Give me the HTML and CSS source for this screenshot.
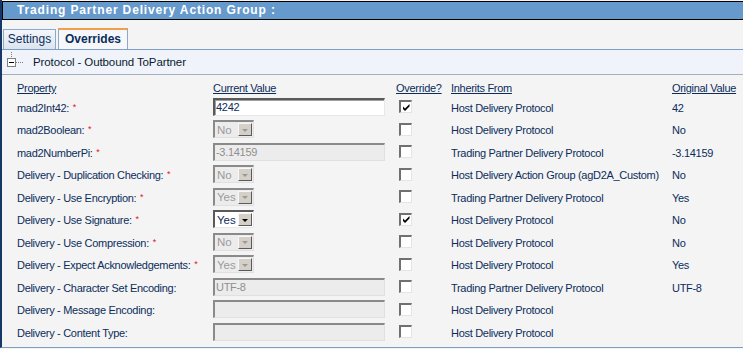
FILE: index.html
```html
<!DOCTYPE html>
<html>
<head>
<meta charset="utf-8">
<link rel="stylesheet" href="styles.css">
</head>
<body>
<div class="page">
  <div class="titlebar">Trading Partner Delivery Action Group :</div>
  <div class="tabs">
    <div class="tab">Settings</div>
    <div class="tab active">Overrides</div>
  </div>
  <div class="tree">
    <svg class="expander" width="22" height="24" viewBox="0 0 22 24">
      <line x1="9.5" y1="2" x2="9.5" y2="8" stroke="#808080" stroke-dasharray="1 1"/>
      <rect x="5.5" y="8.5" width="8" height="8" fill="#fff" stroke="#808080"/>
      <line x1="7" y1="12.5" x2="12" y2="12.5" stroke="#000"/>
      <line x1="14" y1="12.5" x2="21" y2="12.5" stroke="#808080" stroke-dasharray="1 1"/>
    </svg>
    <span class="tree-label">Protocol - Outbound ToPartner</span>
  </div>
  <div class="grid">
    <div class="row head">
      <span class="hd">Property</span>
      <span class="hd">Current Value</span>
      <span class="hd">Override?</span>
      <span class="hd">Inherits From</span>
      <span class="hd">Original Value</span>
    </div>

    <div class="row">
      <span class="lbl">mad2Int42: <span class="req">*</span></span>
      <span class="field"><span class="text">4242</span></span>
      <span class="cb checked"><svg width="9" height="9" viewBox="0 0 9 9"><path d="M1 3.5 L3 5.5 L7.5 1 L7.5 3.5 L3 8 L1 6 Z" fill="#000"/></svg></span>
      <span class="inh">Host Delivery Protocol</span>
      <span class="orig">42</span>
    </div>

    <div class="row">
      <span class="lbl">mad2Boolean: <span class="req">*</span></span>
      <span class="sel disabled"><span class="sv">No</span><span class="btn"><span class="arr"></span></span></span>
      <span class="cb"></span>
      <span class="inh">Host Delivery Protocol</span>
      <span class="orig">No</span>
    </div>

    <div class="row">
      <span class="lbl">mad2NumberPi: <span class="req">*</span></span>
      <span class="field disabled"><span class="text">-3.14159</span></span>
      <span class="cb"></span>
      <span class="inh">Trading Partner Delivery Protocol</span>
      <span class="orig">-3.14159</span>
    </div>

    <div class="row">
      <span class="lbl">Delivery - Duplication Checking: <span class="req">*</span></span>
      <span class="sel disabled"><span class="sv">No</span><span class="btn"><span class="arr"></span></span></span>
      <span class="cb"></span>
      <span class="inh">Host Delivery Action Group (agD2A_Custom)</span>
      <span class="orig">No</span>
    </div>

    <div class="row">
      <span class="lbl">Delivery - Use Encryption: <span class="req">*</span></span>
      <span class="sel disabled"><span class="sv">Yes</span><span class="btn"><span class="arr"></span></span></span>
      <span class="cb"></span>
      <span class="inh">Trading Partner Delivery Protocol</span>
      <span class="orig">Yes</span>
    </div>

    <div class="row">
      <span class="lbl">Delivery - Use Signature: <span class="req">*</span></span>
      <span class="sel"><span class="sv">Yes</span><span class="btn"><span class="arr"></span></span></span>
      <span class="cb checked"><svg width="9" height="9" viewBox="0 0 9 9"><path d="M1 3.5 L3 5.5 L7.5 1 L7.5 3.5 L3 8 L1 6 Z" fill="#000"/></svg></span>
      <span class="inh">Host Delivery Protocol</span>
      <span class="orig">No</span>
    </div>

    <div class="row">
      <span class="lbl">Delivery - Use Compression: <span class="req">*</span></span>
      <span class="sel disabled"><span class="sv">No</span><span class="btn"><span class="arr"></span></span></span>
      <span class="cb"></span>
      <span class="inh">Host Delivery Protocol</span>
      <span class="orig">No</span>
    </div>

    <div class="row">
      <span class="lbl">Delivery - Expect Acknowledgements: <span class="req">*</span></span>
      <span class="sel disabled"><span class="sv">Yes</span><span class="btn"><span class="arr"></span></span></span>
      <span class="cb"></span>
      <span class="inh">Host Delivery Protocol</span>
      <span class="orig">Yes</span>
    </div>

    <div class="row">
      <span class="lbl">Delivery - Character Set Encoding:</span>
      <span class="field disabled"><span class="text">UTF-8</span></span>
      <span class="cb"></span>
      <span class="inh">Trading Partner Delivery Protocol</span>
      <span class="orig">UTF-8</span>
    </div>

    <div class="row">
      <span class="lbl">Delivery - Message Encoding:</span>
      <span class="field disabled"><span class="text"></span></span>
      <span class="cb"></span>
      <span class="inh">Host Delivery Protocol</span>
      <span class="orig"></span>
    </div>

    <div class="row">
      <span class="lbl">Delivery - Content Type:</span>
      <span class="field disabled"><span class="text"></span></span>
      <span class="cb"></span>
      <span class="inh">Host Delivery Protocol</span>
      <span class="orig"></span>
    </div>
  </div>
</div>
</body>
</html>
```

FILE: styles.css
```css
* { box-sizing: border-box; }
html, body { margin: 0; padding: 0; }
body {
  width: 743px;
  height: 349px;
  overflow: hidden;
  background: #f4f4f4;
  font-family: "Liberation Sans", Arial, sans-serif;
  font-size: 11px;
  letter-spacing: -0.3px;
  color: #0b2d5b;
}
.page {
  height: 348px;
  border-left: 2px solid #173766;
  border-bottom: 1px solid #7b9fc2;
  padding-top: 1px;
  overflow: hidden;
}
.titlebar {
  height: 19px;
  background: #6699cc;
  border: 1px solid #000;
  border-right: none;
  color: #fff;
  font-weight: bold;
  font-size: 12px;
  letter-spacing: 0.85px;
  line-height: 17px;
  padding-left: 14px;
  white-space: nowrap;
}
.tabs {
  display: flex;
  align-items: flex-end;
  gap: 2px;
  height: 30px;
  padding-left: 1px;
  border-bottom: 1px solid #7b9fc2;
}
.tab {
  height: 20px;
  width: 53px;
  border: 1px solid #8ea8c8;
  border-bottom: none;
  background: linear-gradient(#f4f7fb, #dbe4ee);
  line-height: 19px;
  text-align: center;
  font-size: 12px;
  letter-spacing: 0;
}
.tab.active {
  height: 21px;
  width: 70px;
  border-top: 2px solid #f0a04a;
  background: #f5f7fa;
  font-weight: bold;
  line-height: 18px;
}
.tree {
  display: flex;
  align-items: center;
  height: 25px;
  background: #f0f4fa;
  border-bottom: 1px solid #a3b0bf;
}
.expander { flex: none; }
.tree-label {
  margin-left: 9px;
  color: #0a1a30;
  font-size: 11.5px;
  letter-spacing: -0.1px;
}
.grid { padding: 5px 0 0 15px; }
.row {
  display: grid;
  grid-template-columns: 196px 183px 55px 221px 1fr;
  height: 22.5px;
  align-items: center;
  white-space: nowrap;
}
.row.head { height: 16px; }
.hd { text-decoration: underline; }
.req {
  color: #e0141e;
  font-size: 9px;
  vertical-align: 2px;
  margin-left: 1px;
}
.field {
  display: flex;
  align-items: center;
  width: 172px;
  height: 18px;
  margin-bottom: 1px;
  background: #fff;
  border-style: solid;
  border-width: 2px 1px 1px 2px;
  border-color: #5a5a5a #e8e8e8 #e8e8e8 #5a5a5a;
  box-shadow: inset 1px 1px 0 #a0a0a0;
  padding-left: 1px;
  color: #0b2d5b;
}
.field.disabled {
  background: #ececec;
  color: #8f8f8f;
  border-color: #8a8a8a #e0e0e0 #e0e0e0 #8a8a8a;
  box-shadow: none;
}
.sel {
  display: flex;
  align-items: center;
  width: 41px;
  height: 18px;
  margin-bottom: 1px;
  background: #fff;
  border-style: solid;
  border-width: 2px 1px 1px 2px;
  border-color: #5a5a5a #e8e8e8 #e8e8e8 #5a5a5a;
  color: #0b2d5b;
}
.sel.disabled {
  background: #ececec;
  color: #9a9a9a;
  border-color: #8a8a8a #e0e0e0 #e0e0e0 #8a8a8a;
}
.sv { flex: 1; padding-left: 2px; font-size: 11.5px; letter-spacing: 0; }
.btn {
  display: flex;
  align-items: center;
  justify-content: center;
  width: 14px;
  height: 13px;
  margin-right: 1px;
  background: #d4d0c8;
  border-style: solid;
  border-width: 1px;
  border-color: #f8f8f8 #5a5a5a #5a5a5a #f8f8f8;
}
.arr {
  width: 0;
  height: 0;
  border-left: 3px solid transparent;
  border-right: 3px solid transparent;
  border-top: 3px solid #000;
  margin-top: 1px;
}
.sel.disabled .arr { border-top-color: #9a9a9a; }
.cb {
  display: flex;
  align-items: center;
  justify-content: center;
  width: 13px;
  height: 13px;
  margin-left: 3px;
  margin-bottom: 1px;
  background: #fff;
  border-style: solid;
  border-width: 2px 1px 1px 2px;
  border-color: #707070 #e4e4e4 #e4e4e4 #707070;
}
.cb svg { display: block; }
.inh, .orig, .lbl { padding-top: 1px; }
```
